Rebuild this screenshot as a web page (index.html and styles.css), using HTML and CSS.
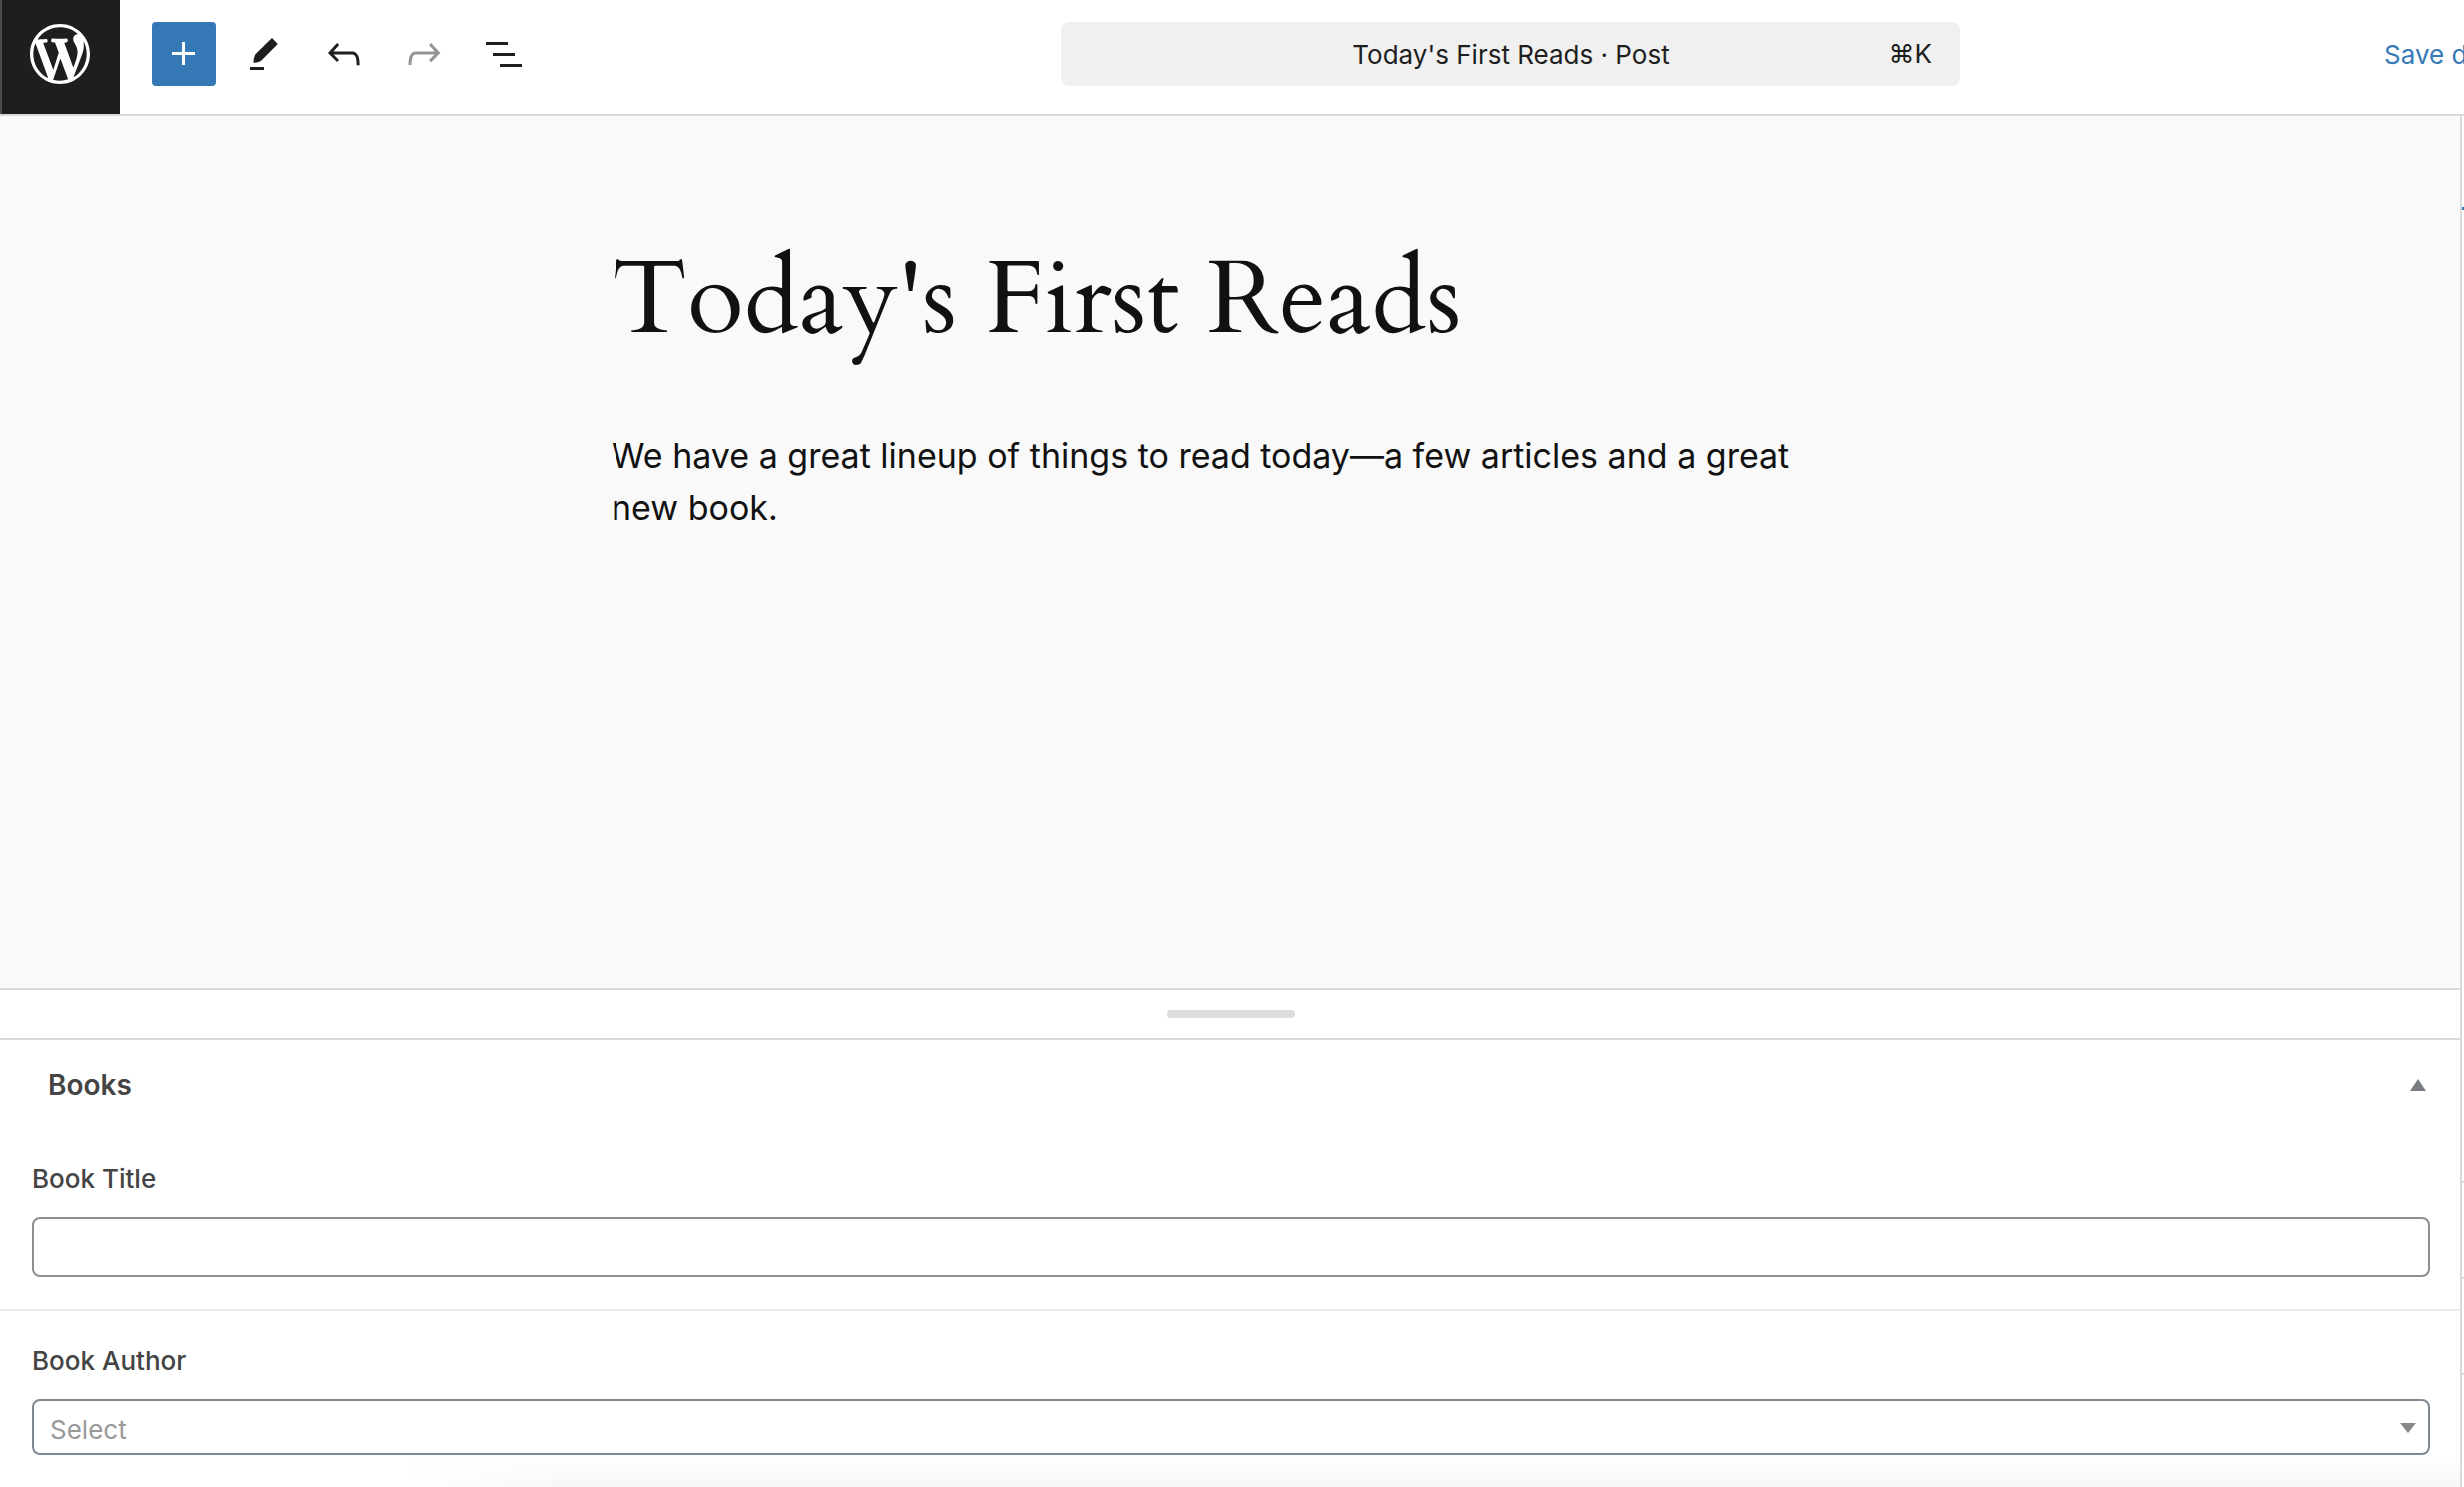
FILE: index.html
```html
<!DOCTYPE html>
<html lang="en">
<head>
<meta charset="utf-8">
<title>Today's First Reads</title>
<link rel="stylesheet" href="styles.css">
</head>
<body>
<div class="editor">
  <header class="topbar">
    <a class="logo" href="#" aria-label="View posts">
      <svg viewBox="-2 -2 24 24" width="72" height="72"><path fill="currentColor" d="M20 10c0-5.51-4.49-10-10-10C4.48 0 0 4.49 0 10c0 5.52 4.48 10 10 10 5.51 0 10-4.48 10-10zM7.78 15.37L4.37 6.22c.55-.02 1.17-.08 1.17-.08.5-.06.44-1.13-.06-1.11 0 0-1.45.11-2.37.11-.18 0-.37 0-.58-.01C4.12 2.69 6.87 1.11 10 1.11c2.33 0 4.45.87 6.05 2.34-.68-.11-1.65.39-1.65 1.58 0 .74.45 1.36.9 2.1.35.61.55 1.36.55 2.46 0 1.49-1.4 5-1.4 5l-3.03-8.37c.54-.02.82-.17.82-.17.5-.05.44-1.25-.06-1.22 0 0-1.44.12-2.38.12-.87 0-2.33-.12-2.33-.12-.5-.03-.56 1.2-.06 1.22l.92.08 1.26 3.41zM17.41 10c.24-.64.74-1.87.43-4.25.7 1.29 1.05 2.71 1.05 4.25 0 3.29-1.73 6.24-4.4 7.78.97-2.59 1.94-5.2 2.92-7.78zM6.1 18.09C3.12 16.65 1.11 13.53 1.11 10c0-1.3.23-2.48.72-3.59C3.25 10.3 4.67 14.2 6.1 18.09zm4.03-6.63l2.58 6.98c-.86.29-1.76.45-2.71.45-.79 0-1.57-.11-2.29-.33.81-2.38 1.62-4.74 2.42-7.1z"/></svg>
    </a>
    <div class="tools">
      <button class="tool primary" aria-label="Add block"><svg viewBox="0 0 24 24" width="48" height="48"><path fill="currentColor" d="M11 12.5V17.500H12.500V12.500H17.500V11H12.500V6H11V11H6V12.500H11Z"/></svg></button>
      <button class="tool" aria-label="Tools"><svg viewBox="0 0 24 24" width="48" height="48"><path fill="currentColor" d="M16 4l2.900 3-8.300 8.400-1.500.700-2.400.300.200-2 .7-2.100L16 4zM5 18.500h7V20H5z"/></svg></button>
      <button class="tool" aria-label="Undo"><svg viewBox="0 0 24 24" width="48" height="48"><path fill="currentColor" d="M18.300 11.700c-.6-.6-1.400-.9-2.300-.9H6.700l2.900-3.300-1.100-1-4.500 5L8.500 16l1-1-2.700-2.700H16c.5 0 .9.200 1.300.500 1 1 1 3.400 1 4.500v.3h1.500v-.2c0-1.500 0-4.300-1.500-5.700z"/></svg></button>
      <button class="tool" aria-label="Redo" disabled><svg viewBox="0 0 24 24" width="48" height="48"><path fill="currentColor" d="M15.600 6.500l-1.100 1 2.900 3.300H8c-.9 0-1.700.3-2.300.9-1.400 1.500-1.400 4.200-1.400 5.600v.2h1.500v-.3c0-1.100 0-3.500 1-4.500.3-.3.700-.5 1.300-.5h9.200L14.500 15l1.100 1.100 4.600-4.600-4.600-5z"/></svg></button>
      <button class="tool" aria-label="Document overview"><svg viewBox="0 0 24 24" width="48" height="48"><path fill="currentColor" d="M3 6h11v1.500H3V6Zm3.500 5.500h11V13h-11v-1.500ZM21 17H10v1.500h11V17Z"/></svg></button>
    </div>
    <div class="center">
      <button class="command">
        <span class="command-title">Today's First Reads · Post</span>
        <span class="shortcut">⌘K</span>
      </button>
    </div>
    <div class="actions"><a class="save" href="#">Save draft</a></div>
  </header>
  <div class="body">
    <main class="main">
      <article class="canvas">
        <h1 class="title">Today's First Reads</h1>
        <p class="text">We have a great lineup of things to read today—a few articles and a great new book.</p>
      </article>
      <div class="resizer"><span class="grip"></span></div>
      <section class="metabox">
        <header class="box-head">
          <h2 class="box-title">Books</h2>
          <button class="toggle" aria-label="Toggle panel: Books"><svg viewBox="0 0 16 12" width="16" height="12"><path fill="currentColor" d="M8 0l8 12H0z"/></svg></button>
        </header>
        <div class="field">
          <label class="label" for="book-title">Book Title</label>
          <input class="input" id="book-title" type="text">
        </div>
        <div class="field">
          <label class="label" for="book-author">Book Author</label>
          <div class="select-wrap">
            <select class="input select" id="book-author"><option>Select</option></select>
            <svg class="arrow" viewBox="0 0 16 10" width="16" height="10"><path fill="currentColor" d="M0 0h16L8 10z"/></svg>
          </div>
        </div>
        <div class="fade"></div>
      </section>
    </main>
    <aside class="sidebar">
      <span class="tab-line"></span>
      <div class="panels"><span class="panel"></span><span class="panel"></span><span class="panel"></span></div>
    </aside>
  </div>
</div>
</body>
</html>
```
FILE: styles.css
```css
* { box-sizing: border-box; }

body {
  margin: 0;
  background: #fff;
  color: #1e1e1e;
  font-family: Inter, "Liberation Sans", sans-serif;
  font-size: 26px;
}

button { border: 0; padding: 0; background: none; color: inherit; font: inherit; }

.editor { display: flex; flex-direction: column; height: 100vh; overflow: hidden; }

/* Top bar */
.topbar {
  display: flex;
  flex: none;
  height: 116px;
  border-bottom: 2px solid #d9d9d9;
}
.logo {
  display: flex;
  flex: none;
  align-items: center;
  justify-content: center;
  width: 120px;
  padding-bottom: 6px;
  background: #1e1e1e;
  box-shadow: inset 2px 0 #4b4b4b;
  color: #fff;
}
.tools { display: flex; gap: 16px; padding: 22px 0 0 32px; }
.tool {
  display: flex;
  align-items: center;
  justify-content: center;
  width: 64px;
  height: 64px;
  border-radius: 4px;
}
.tool.primary { background: #357ab7; color: #fff; }
.tool:disabled { color: #949494; }
.center { display: flex; flex: 1; justify-content: center; padding: 22px 0 0 102px; }
.command {
  position: relative;
  width: 900px;
  height: 64px;
  border-radius: 8px;
  background: #f0f0f0;
}
.shortcut { position: absolute; right: 28px; top: 16px; }
.actions {
  flex: none;
  width: 80px;
  padding-top: 22px;
  overflow: hidden;
  line-height: 66px;
  white-space: nowrap;
}
.save { color: #357ab7; text-decoration: none; }

/* Editing area */
.body { display: flex; flex: 1; min-height: 0; }
.main { display: flex; flex: 1; flex-direction: column; min-width: 0; }
.canvas { flex: 1; padding: 120px 612px 0; background: #f9f9f9; color: #111; }
.title {
  margin: 0;
  font-family: Cardo, "EB Garamond", "Liberation Serif", serif;
  font-size: 104px;
  font-weight: 400;
  line-height: 128px;
}
.text { margin: 66px 0 0; font-size: 34px; line-height: 52px; }
.resizer {
  display: flex;
  flex: none;
  align-items: center;
  justify-content: center;
  height: 52px;
  border: solid #d9d9d9;
  border-width: 2px 0;
}
.grip { width: 128px; height: 8px; border-radius: 4px; background: #ddd; }

/* Meta box */
.metabox { position: relative; flex: none; color: #444; }
.box-head {
  display: flex;
  align-items: center;
  justify-content: space-between;
  height: 89px;
  padding: 0 36px 0 48px;
}
.box-title { margin: 0; font-size: 28px; font-weight: 600; }
.toggle { display: flex; color: #787c82; }
.field { padding: 32px; }
.field + .field { border-top: 2px solid #eaecf0; }
.label { display: block; margin-bottom: 20px; font-weight: 500; line-height: 36px; }
.input {
  display: block;
  width: 100%;
  height: 60px;
  border: 2px solid #8c8f94;
  border-radius: 8px;
  background: #fff;
}
.select-wrap { position: relative; }
.select {
  height: 56px;
  padding: 4px 16px 0;
  border-color: #7e8993;
  appearance: none;
  color: #999;
  font: inherit;
}
.arrow { position: absolute; top: 24px; right: 14px; color: #888; }
.fade {
  position: absolute;
  right: 0;
  bottom: 0;
  left: 400px;
  height: 32px;
  background: linear-gradient(to bottom, transparent, #f7f7f7);
  mask-image: linear-gradient(to right, transparent, #000 160px);
  pointer-events: none;
}

/* Settings sidebar edge, laid over the end of the main column's rules */
.sidebar {
  position: relative;
  flex: none;
  width: 4px;
  margin-left: -2px;
  border-left: 2px solid #d9d9d9;
}
.tab-line { display: block; height: 3px; margin-top: 91px; background: #357ab7; }
.panels { padding-top: 972px; }
.panel { display: block; height: 96px; border-top: 2px solid #ddd; }
```
